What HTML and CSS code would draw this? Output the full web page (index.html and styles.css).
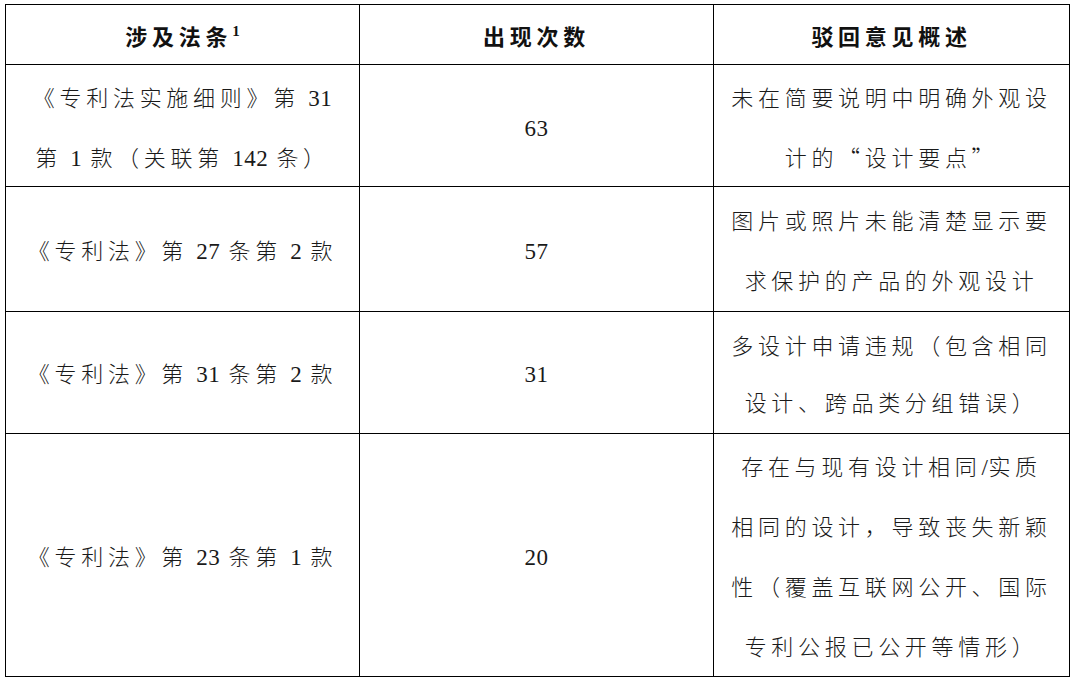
FILE: index.html
```html
<!DOCTYPE html>
<html lang="zh-CN">
<head>
<meta charset="utf-8">
<title>驳回意见统计</title>
<link rel="stylesheet" href="styles.css">
</head>
<body>
<table class="law-table">
  <colgroup>
    <col class="col-law">
    <col class="col-count">
    <col class="col-desc">
  </colgroup>
  <thead>
    <tr class="row-head">
      <th>涉及法条<sup class="note">1</sup></th>
      <th>出现次数</th>
      <th>驳回意见概述</th>
    </tr>
  </thead>
  <tbody>
    <tr class="row-a">
      <td>《专利法实施细则》第<span class="num"> 31</span><br>第<span class="num"> 1 </span>款（关联第<span class="num"> 142 </span>条）</td>
      <td><span class="num">63</span></td>
      <td>未在简要说明中明确外观设<br>计的<span class="cjk">“</span>设计要点<span class="cjk">”</span></td>
    </tr>
    <tr class="row-b">
      <td>《专利法》第<span class="num"> 27 </span>条第<span class="num"> 2 </span>款</td>
      <td><span class="num">57</span></td>
      <td>图片或照片未能清楚显示要<br>求保护的产品的外观设计</td>
    </tr>
    <tr class="row-c">
      <td>《专利法》第<span class="num"> 31 </span>条第<span class="num"> 2 </span>款</td>
      <td><span class="num">31</span></td>
      <td>多设计申请违规（包含相同<br>设计、跨品类分组错误）</td>
    </tr>
    <tr class="row-d">
      <td>《专利法》第<span class="num"> 23 </span>条第<span class="num"> 1 </span>款</td>
      <td><span class="num">20</span></td>
      <td>存在与现有设计相同<span class="num">/</span>实质<br>相同的设计，导致丧失新颖<br>性（覆盖互联网公开、国际<br>专利公报已公开等情形）</td>
    </tr>
  </tbody>
</table>
</body>
</html>
```

FILE: styles.css
```css
html, body {
  background: #ffffff;
}
body {
  margin: 4px 0 0 5px;
  font-family: "Noto Sans CJK SC", sans-serif;
  color: #1a1a1a;
}
.law-table {
  border-collapse: collapse;
  table-layout: fixed;
  width: 1064px;
}
.col-law { width: 354px; }
.col-count { width: 354px; }
.col-desc { width: 356px; }
.law-table th,
.law-table td {
  border: 1px solid #000;
  padding: 0;
  text-align: center;
  vertical-align: middle;
  font-size: 22px;
  letter-spacing: 4.7px;
  line-height: 60px;
  white-space: nowrap;
}
.law-table td {
  font-weight: 300;
}
.law-table th {
  font-weight: 700;
  color: #111;
  line-height: 40px;
}
.num {
  font-family: "Liberation Serif", serif;
  font-weight: 400;
  font-size: 23px;
  line-height: 1;
  letter-spacing: 0.5px;
  word-spacing: 2px;
}
.cjk {
  font-family: "Noto Sans CJK SC", sans-serif;
  line-height: 1;
}
.row-head th { height: 59px; }
.row-a td { height: 121px; }
.row-b td { height: 124px; }
.row-c td { height: 121px; line-height: 57px; }
.row-d td { height: 242px; }
.note {
  font-family: "Liberation Serif", serif;
  font-size: 15px;
  font-weight: 700;
  line-height: 0;
  letter-spacing: 0;
  vertical-align: 9px;
}
```
